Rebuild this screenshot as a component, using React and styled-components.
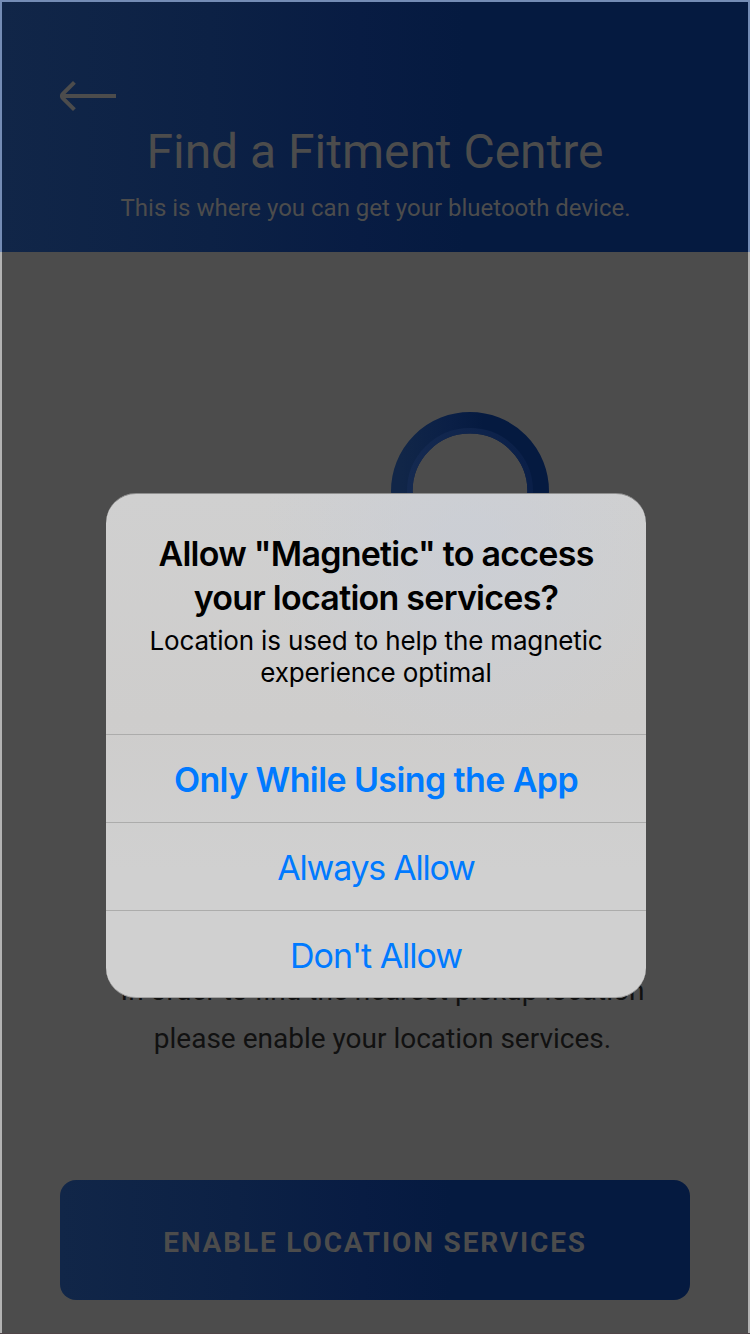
import React from "react";
import styled, { createGlobalStyle } from "styled-components";

const GlobalStyle = createGlobalStyle`
  *, *::before, *::after { box-sizing: border-box; }
  body { margin: 0; }
  h1, h2, p { margin: 0; font-weight: 400; }
  button { border: 0; margin: 0; padding: 0; background: none; font: inherit; }
`;

const navy = "linear-gradient(90deg, #112648 0%, #0c2145 28%, #081c43 48%, #051a40 62%, #051a40 100%)";

const Screen = styled.div`
  position: relative;
  display: flex;
  flex-direction: column;
  width: 750px;
  height: 1334px;
  overflow: hidden;
  border-bottom: 1px solid #4f4548;
  background: #4c4c4c;
  font-family: Roboto, "Liberation Sans", sans-serif;
`;

const Header = styled.header`
  display: flex;
  flex-direction: column;
  align-items: center;
  height: 252px;
  padding-top: 80px;
  background: ${navy};
  color: #4c4c4c;
`;

const BackButton = styled.button`
  align-self: flex-start;
  height: 32px;
  margin-left: 58px;
  svg { display: block; }
`;

const Title = styled.h1`
  margin-top: 8px;
  font-size: 48px;
  line-height: 64px;
  letter-spacing: -0.02px;
  white-space: nowrap;
`;

const Subtitle = styled.p`
  margin-top: 8px;
  padding-left: 1px;
  font-size: 24px;
  line-height: 32px;
  white-space: nowrap;
`;

const Content = styled.main`
  display: flex;
  flex: 1;
  flex-direction: column;
  align-items: center;
  padding: 160px 60px 33px;
`;

const PinArt = styled.svg`
  flex: none;
  width: 158px;
  height: 158px;
  margin-left: 190px;
`;

const Hint = styled.p`
  margin-top: 397px;
  padding-left: 15px;
  color: #111;
  font-size: 28px;
  line-height: 48px;
  text-align: center;
  white-space: nowrap;
`;

const PrimaryButton = styled.button`
  width: 630px;
  height: 120px;
  margin-top: auto;
  padding-top: 4px;
  border-radius: 16px;
  background: ${navy};
  color: #4c4c4c;
  font-size: 28px;
  font-weight: 700;
  letter-spacing: 1.85px;
`;

const Dialog = styled.section`
  position: absolute;
  top: 493px;
  left: 106px;
  display: flex;
  flex-direction: column;
  width: 540px;
  height: 505px;
  overflow: hidden;
  border-top: 1px solid #8f8f8f;
  border-bottom: 1px solid #a2a2a2;
  border-radius: 30px;
  background:
    radial-gradient(circle at 364px 50px, rgba(201, 206, 216, 0.65), rgba(207, 208, 210, 0) 210px),
    linear-gradient(#d0d0d0, #cecdcc 45%, #d0d0d0 75%);
  font-family: Inter, "Liberation Sans", sans-serif;
  text-align: center;
`;

const DialogBody = styled.div`
  flex: 1;
  padding-top: 38px;
  color: #000;
`;

const DialogTitle = styled.h2`
  font-size: 34px;
  font-weight: 600;
  line-height: 44px;
  letter-spacing: ${(p) => p.$spacing}px;
`;

const DialogText = styled.p`
  margin-top: 5px;
  font-size: 26px;
  line-height: 32px;
  letter-spacing: -0.16px;
`;

const DialogAction = styled.button`
  height: 88px;
  padding-top: ${(p) => (p.$last ? 2 : 1)}px;
  border-top: 1px solid #acacab;
  color: #007aff;
  font-size: 34px;
  font-weight: ${(p) => (p.$strong ? 600 : 400)};
  letter-spacing: ${(p) => p.$spacing}px;
  ${(p) => p.$last && "height: 87px;"}
`;

const Edge = styled.div`
  position: absolute;
  top: ${(p) => p.$top}px;
  left: 0;
  width: 100%;
  height: ${(p) => p.$height}px;
  border: 2px solid ${(p) => p.$color};
  border-top-width: ${(p) => (p.$open ? 0 : 2)}px;
  border-bottom: 0;
  pointer-events: none;
`;

export default function App() {
  return (
    <Screen>
      <GlobalStyle />
      <Header>
        <BackButton aria-label="Back">
          <svg width="60" height="32" viewBox="0 0 60 32" fill="none" stroke="#4c4c4c" strokeWidth="4">
            <path d="M58 16H5M16.4 2.3 5 13.7Q2.7 16 5 18.3L16.4 29.7" />
          </svg>
        </BackButton>
        <Title>Find a Fitment Centre</Title>
        <Subtitle>This is where you can get your bluetooth device.</Subtitle>
      </Header>
      <Content>
        <PinArt viewBox="0 0 158 158" fill="none">
          <defs>
            <linearGradient id="ring" x1="0" y1="0" x2="1" y2="0">
              <stop offset="0" stopColor="#112648" />
              <stop offset="0.36" stopColor="#0a1f46" />
              <stop offset="0.6" stopColor="#051a40" />
              <stop offset="1" stopColor="#051a40" />
            </linearGradient>
            <linearGradient id="inner" x1="0" y1="0" x2="1" y2="0">
              <stop offset="0" stopColor="#142950" />
              <stop offset="1" stopColor="#0a1f48" />
            </linearGradient>
          </defs>
          <circle cx="79" cy="79" r="68.2" stroke="url(#ring)" strokeWidth="21.6" />
          <circle cx="79" cy="79" r="60.2" stroke="url(#inner)" strokeWidth="5.6" />
        </PinArt>
        <Hint>
          In order to find the nearest pickup location
          <br />
          please enable your location services.
        </Hint>
        <PrimaryButton>ENABLE LOCATION SERVICES</PrimaryButton>
      </Content>
      <Dialog role="alertdialog">
        <DialogBody>
          <DialogTitle $spacing={-0.75}>
            Allow "Magnetic" to access
            <br />
            your location services?
          </DialogTitle>
          <DialogText>
            Location is used to help the magnetic
            <br />
            experience optimal
          </DialogText>
        </DialogBody>
        <DialogAction $strong $spacing={-0.6}>Only While Using the App</DialogAction>
        <DialogAction $spacing={-1.25}>Always Allow</DialogAction>
        <DialogAction $last $spacing={-1.05}>Don't Allow</DialogAction>
      </Dialog>
      <Edge $color="#748cb5" $top={0} $height={252} />
      <Edge $color="#b3b3b3" $top={252} $height={1082} $open />
    </Screen>
  );
}
